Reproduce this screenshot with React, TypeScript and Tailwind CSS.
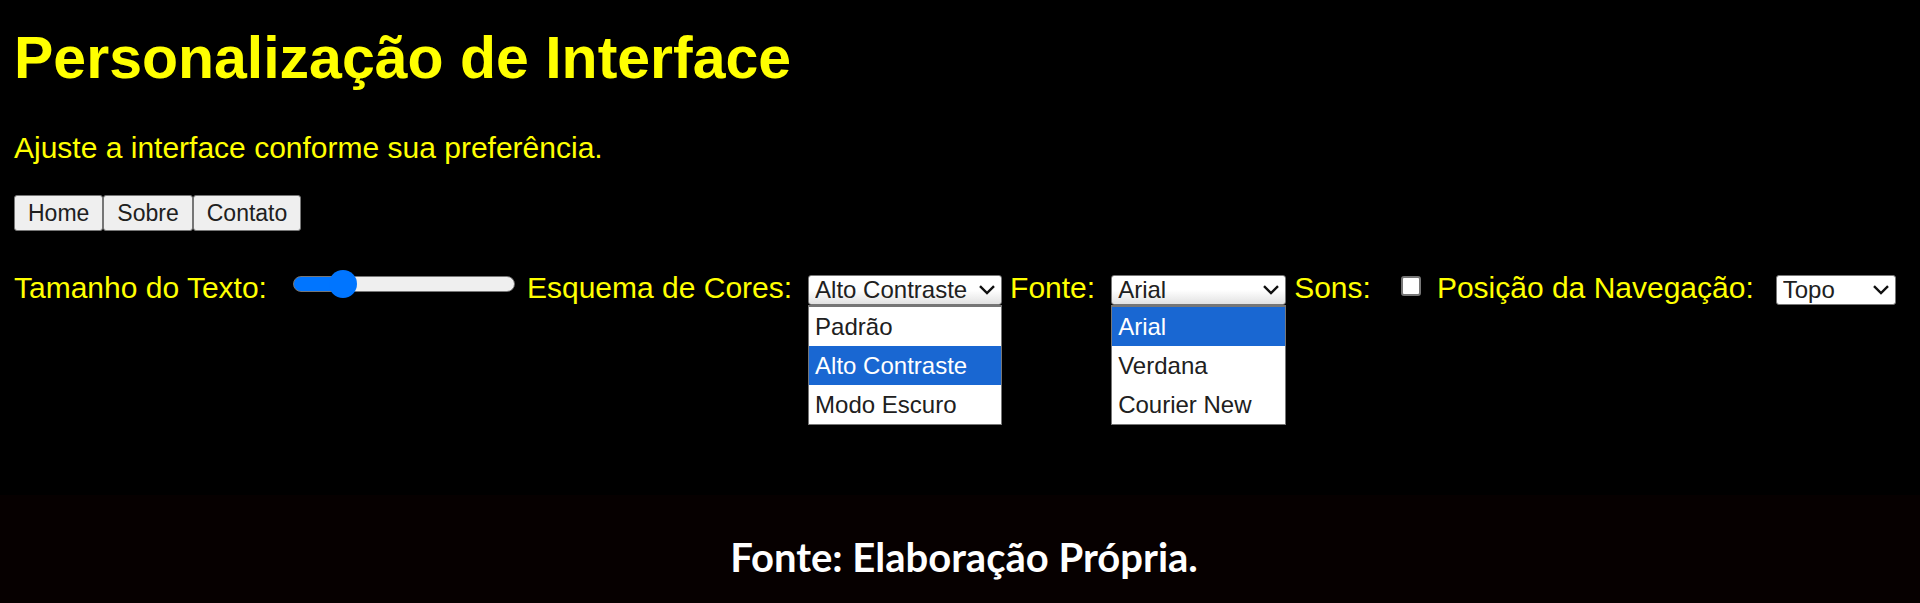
import { useState } from "react";
import type { ReactNode } from "react";

const MIN_SIZE = 12;
const MAX_SIZE = 34;

function Chevron() {
  return (
    <svg
      viewBox="0 0 16 10"
      className="pointer-events-none absolute top-[10px] right-[7px] h-[10px] w-4"
      fill="none"
      stroke="#101010"
      strokeWidth="2.4"
      aria-hidden="true"
    >
      <path d="M1 1.2 L8 8 L15 1.2" />
    </svg>
  );
}

type PickerProps = {
  id: string;
  options: string[];
  value: string;
  onChange: (value: string) => void;
  open?: boolean;
  className: string;
};

function Picker({ id, options, value, onChange, open = false, className }: PickerProps) {
  return (
    <div className={`relative ${className}`}>
      <select
        id={id}
        value={value}
        onChange={(e) => onChange(e.target.value)}
        className={`block h-[30px] w-full appearance-none rounded-[3px] border border-[#767676] pl-[6px] text-2xl leading-7 text-[#202020] ${
          open ? "bg-linear-to-b from-white from-50% to-[#e2e2e2]" : "bg-white"
        }`}
      >
        {options.map((o) => (
          <option key={o}>{o}</option>
        ))}
      </select>
      <Chevron />
      {open && (
        <ul
          role="listbox"
          className="absolute top-full left-0 w-full border border-t-2 border-[#767676] bg-white text-2xl text-[#202020]"
        >
          {options.map((o) => (
            <li
              key={o}
              role="option"
              aria-selected={o === value}
              onClick={() => onChange(o)}
              className={`h-[39px] pl-[6px] leading-[39px] ${o === value ? "bg-[#1967d2] text-white" : ""}`}
            >
              {o}
            </li>
          ))}
        </ul>
      )}
    </div>
  );
}

function Field({ id, label, gap, children }: { id: string; label: string; gap: string; children: ReactNode }) {
  return (
    <div className={`flex items-start ${gap}`}>
      <label htmlFor={id} className="leading-[26px]">
        {label}
      </label>
      {children}
    </div>
  );
}

export default function App() {
  const [size, setSize] = useState(16);
  const [scheme, setScheme] = useState("Alto Contraste");
  const [font, setFont] = useState("Arial");
  const [sounds, setSounds] = useState(false);
  const [position, setPosition] = useState("Topo");
  const ratio = (size - MIN_SIZE) / (MAX_SIZE - MIN_SIZE);
  const fill = `calc(14px + ${ratio} * (100% - 28px))`;

  return (
    <div className="flex min-h-screen flex-col bg-black font-['Liberation_Sans',Arial,sans-serif] text-[30px] leading-8 whitespace-nowrap text-[#ffff00]">
      <main className="grow px-[14px] pt-6">
        <h1 className="text-[59px] leading-[68px] font-bold">Personalização de Interface</h1>
        <p className="mt-10">Ajuste a interface conforme sua preferência.</p>

        <nav className="mt-[31px] flex">
          {["Home", "Sobre", "Contato"].map((item) => (
            <button
              key={item}
              type="button"
              className="h-9 rounded-[3px] border border-[#767676] bg-[#efefef] px-[13px] text-[23px] leading-8 text-[#202020]"
            >
              {item}
            </button>
          ))}
        </nav>

        <form className="mt-11 flex items-start gap-2">
          <Field id="size" label="Tamanho do Texto:" gap="gap-[26px]">
            <input
              id="size"
              type="range"
              min={MIN_SIZE}
              max={MAX_SIZE}
              value={size}
              onChange={(e) => setSize(Number(e.target.value))}
              style={{ backgroundImage: `linear-gradient(to right, #0075ff ${fill}, #efefef ${fill})` }}
              className="mt-px mr-1 h-4 w-[222px] appearance-none rounded-full border border-[#767676] [&::-webkit-slider-thumb]:size-7 [&::-webkit-slider-thumb]:appearance-none [&::-webkit-slider-thumb]:rounded-full [&::-webkit-slider-thumb]:bg-[#0075ff]"
            />
          </Field>
          <Field id="scheme" label="Esquema de Cores:" gap="gap-4">
            <Picker
              id="scheme"
              className="w-[194px]"
              options={["Padrão", "Alto Contraste", "Modo Escuro"]}
              value={scheme}
              onChange={setScheme}
              open
            />
          </Field>
          <Field id="font" label="Fonte:" gap="gap-4">
            <Picker
              id="font"
              className="w-[175px]"
              options={["Arial", "Verdana", "Courier New"]}
              value={font}
              onChange={setFont}
              open
            />
          </Field>
          <Field id="sounds" label="Sons:" gap="gap-[30px]">
            <input
              id="sounds"
              type="checkbox"
              checked={sounds}
              onChange={(e) => setSounds(e.target.checked)}
              className="mt-px mr-2 size-5 appearance-none rounded-[3px] border-2 border-[#767676] bg-white checked:bg-[#0075ff]"
            />
          </Field>
          <Field id="position" label="Posição da Navegação:" gap="gap-[22px]">
            <Picker
              id="position"
              className="w-[120px]"
              options={["Topo", "Lateral"]}
              value={position}
              onChange={setPosition}
            />
          </Field>
        </form>
      </main>

      <footer className="bg-[#060000] pt-[38px] pb-[22px] pl-2 text-center font-['Lato',sans-serif] text-[40px] leading-[48px] font-bold text-white">
        Fonte: Elaboração Própria.
      </footer>
    </div>
  );
}
